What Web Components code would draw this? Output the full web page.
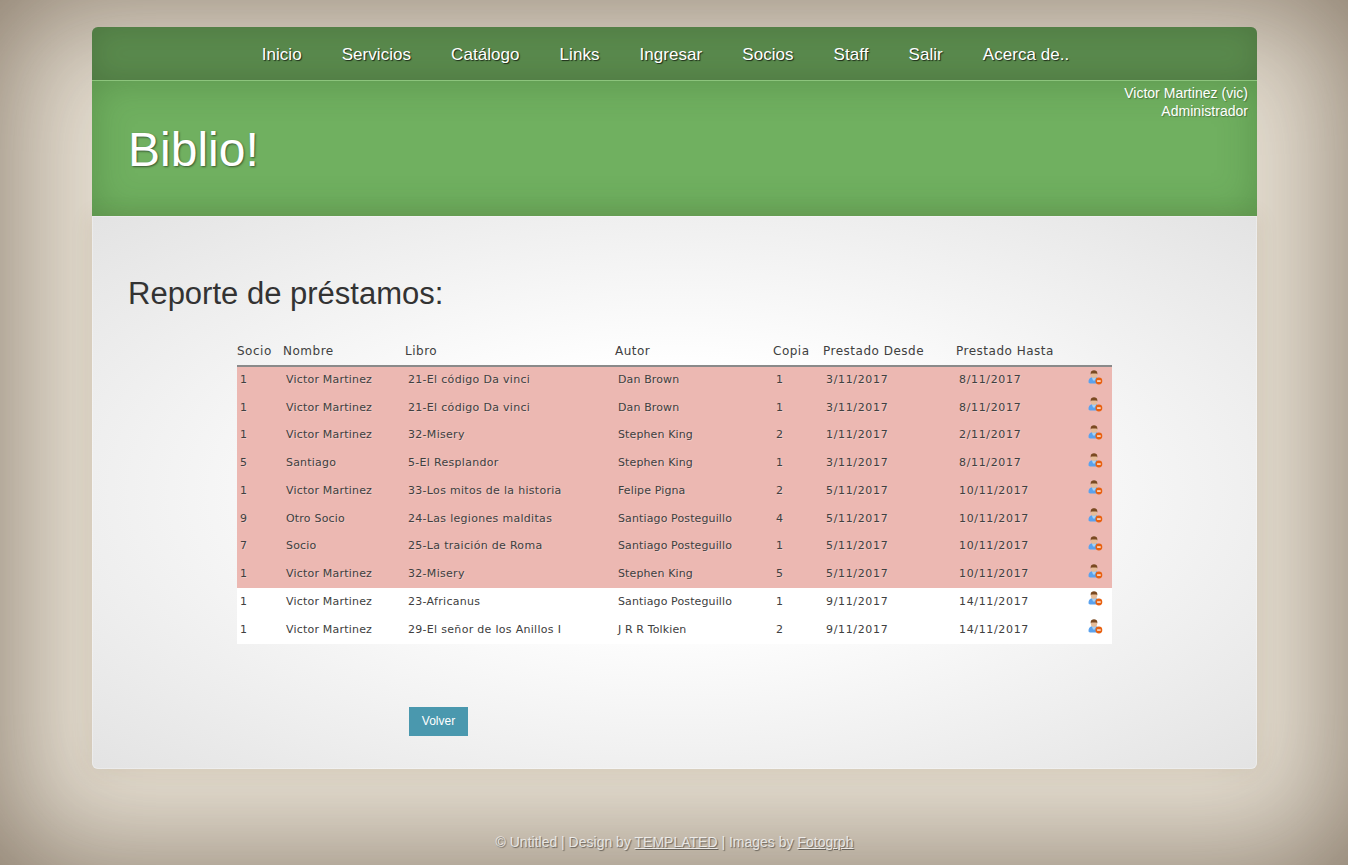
<!DOCTYPE html>
<html lang="es">
<head>
<meta charset="utf-8">
<title>Biblio!</title>
<style>
  html, body { margin: 0; height: 100%; }
  body {
    box-sizing: border-box;
    height: 865px;
    overflow: hidden;
    padding: 27px 91px 0 92px;
    background: #e6dfd2;
    box-shadow: inset 0 0 130px rgba(70, 50, 30, .62);
    font-family: "Liberation Sans", Arial, sans-serif;
  }
</style>
</head>
<body>
  <bib-nav>
    <nav-link>Inicio</nav-link>
    <nav-link>Servicios</nav-link>
    <nav-link>Catálogo</nav-link>
    <nav-link>Links</nav-link>
    <nav-link>Ingresar</nav-link>
    <nav-link>Socios</nav-link>
    <nav-link>Staff</nav-link>
    <nav-link>Salir</nav-link>
    <nav-link>Acerca de..</nav-link>
  </bib-nav>
  <bib-header title-text="Biblio!">
    <span>Victor Martinez (vic)</span>
    <span>Administrador</span>
  </bib-header>
  <bib-content>
    <span slot="title">Reporte de préstamos:</span>
    <prestamos-table></prestamos-table>
    <bib-button>Volver</bib-button>
  </bib-content>
  <bib-footer></bib-footer>

<script>
// barra de navegacion
class BibNav extends HTMLElement {
  constructor() {
    super();
    this.attachShadow({ mode: 'open' });
    this.shadowRoot.innerHTML = `<style>
      :host {
        display: flex;
        justify-content: center;
        gap: 40px;
        height: 53px;
        padding-right: 18px;
        border-radius: 6px 6px 0 0;
        background: #5a8a4d;
        box-shadow: inset 0 0 30px rgba(30, 50, 25, .22);
      }
    </style><slot></slot>`;
  }
}
customElements.define('bib-nav', BibNav);

class NavLink extends HTMLElement {
  constructor() {
    super();
    this.attachShadow({ mode: 'open' });
    this.shadowRoot.innerHTML = `<style>
      :host {
        display: block;
        font-size: 17px;
        letter-spacing: .05px;
        line-height: 55px;
        color: #fff;
        text-shadow: 1px 1px 1px rgba(0, 0, 0, .7);
      }
    </style><slot></slot>`;
  }
}
customElements.define('nav-link', NavLink);

class BibHeader extends HTMLElement {
  constructor() {
    super();
    this.attachShadow({ mode: 'open' });
    this.shadowRoot.innerHTML = `<style>
      :host {
        display: block;
        box-sizing: border-box;
        height: 136px;
        padding: 3px 9px 0 36px;
        border-top: 1px solid #8cc47c;
        background: #70b060;
        box-shadow: inset 0 0 38px rgba(40, 80, 30, .3);
        color: #fff;
      }
      .user {
        display: flex;
        flex-direction: column;
        align-items: flex-end;
        font-size: 14px;
        letter-spacing: .02px;
        line-height: 18px;
        text-shadow: 1px 1px 1px rgba(0, 0, 0, .3);
      }
      h1 {
        margin: 0;
        padding-top: 2px;
        font-size: 48px;
        line-height: 55px;
        font-weight: normal;
        text-shadow: 1px 1px 2px rgba(0, 0, 0, .5);
      }
    </style>
    <div class="user"><slot></slot></div>
    <h1></h1>`;
  }
  connectedCallback() {
    this.shadowRoot.querySelector('h1').textContent = this.getAttribute('title-text');
  }
}
customElements.define('bib-header', BibHeader);

class BibContent extends HTMLElement {
  constructor() {
    super();
    this.attachShadow({ mode: 'open' });
    this.shadowRoot.innerHTML = `<style>
      :host {
        display: block;
        box-sizing: border-box;
        height: 553px;
        padding: 58px 145px 0 36px;
        border-radius: 0 0 6px 6px;
        background: radial-gradient(ellipse farthest-corner at 50% 50%, #fff 32%, #e3e3e3 100%);
        box-shadow: inset 0 0 0 1px rgba(255, 255, 255, .3), 0 1px 22px rgba(130, 100, 60, .14);
      }
      h2 {
        margin: 0 0 22px;
        font-size: 31px;
        line-height: 40px;
        font-weight: normal;
        color: #333;
      }
      .body { padding-left: 109px; }
    </style>
    <h2><slot name="title"></slot></h2>
    <div class="body"><slot></slot></div>`;
  }
}
customElements.define('bib-content', BibContent);

const filas = [
  ['1', 'Victor Martinez', '21-El código Da vinci', 'Dan Brown', '1', '3/11/2017', '8/11/2017', 1],
  ['1', 'Victor Martinez', '21-El código Da vinci', 'Dan Brown', '1', '3/11/2017', '8/11/2017', 1],
  ['1', 'Victor Martinez', '32-Misery', 'Stephen King', '2', '1/11/2017', '2/11/2017', 1],
  ['5', 'Santiago', '5-El Resplandor', 'Stephen King', '1', '3/11/2017', '8/11/2017', 1],
  ['1', 'Victor Martinez', '33-Los mitos de la historia', 'Felipe Pigna', '2', '5/11/2017', '10/11/2017', 1],
  ['9', 'Otro Socio', '24-Las legiones malditas', 'Santiago Posteguillo', '4', '5/11/2017', '10/11/2017', 1],
  ['7', 'Socio', '25-La traición de Roma', 'Santiago Posteguillo', '1', '5/11/2017', '10/11/2017', 1],
  ['1', 'Victor Martinez', '32-Misery', 'Stephen King', '5', '5/11/2017', '10/11/2017', 1],
  ['1', 'Victor Martinez', '23-Africanus', 'Santiago Posteguillo', '1', '9/11/2017', '14/11/2017', 0],
  ['1', 'Victor Martinez', '29-El señor de los Anillos I', 'J R R Tolkien', '2', '9/11/2017', '14/11/2017', 0]
];

const iconoSocio = `<svg width="15" height="15" viewBox="0 0 15 15">
  <path d="M.5 12.500C.3 9.800 1.500 7.900 3.500 7.300h5c2 .6 3 2.300 3 4.300l-2 2H1.800z" fill="#5aa2ee"/>
  <path d="M3.800 7.300h4.400L7 10.500H5z" fill="#a8d2f4"/>
  <rect x="3" y="1" width="6" height="6.800" rx="2.600" fill="#e6bc98"/>
  <path d="M2.700 4.400V3C2.700 1.200 4.200.3 6 .3S9.300 1.200 9.300 3v1.400L8.500 3.400H3.500z" fill="#7a4a22"/>
  <circle cx="10.900" cy="11" r="3.400" fill="#e8600f"/>
  <rect x="9.100" y="10.400" width="3.600" height="1.300" fill="#fff"/>
</svg>`;

class PrestamosTable extends HTMLElement {
  constructor() {
    super();
    this.attachShadow({ mode: 'open' });
    const heads = ['Socio', 'Nombre', 'Libro', 'Autor', 'Copia', 'Prestado Desde', 'Prestado Hasta', ''];
    const cuerpo = filas.map(f => `<tr class="${f[7] ? 'vencido' : ''}">
      ${f.slice(0, 7).map(c => `<td>${c}</td>`).join('')}<td class="ico">${iconoSocio}</td></tr>`).join('');
    this.shadowRoot.innerHTML = `<style>
      :host { display: block; width: 875px; }
      table {
        width: 875px;
        table-layout: fixed;
        border-collapse: collapse;
        font-family: "DejaVu Sans", sans-serif;
        color: #404040;
      }
      th {
        box-sizing: border-box;
        height: 30px;
        padding: 0;
        text-align: left;
        font-size: 12px;
        font-weight: normal;
        letter-spacing: .5px;
        border-bottom: 2px solid #8a8a8a;
      }
      td {
        box-sizing: border-box;
        height: 27.75px;
        padding: 0 0 1px 3px;
        font-size: 11px;
        background: #fff;
        white-space: nowrap;
      }
      /* la fuente del original es mas ancha, se compensa por columna */
      td:nth-child(2) { letter-spacing: .2px; }
      td:nth-child(3) { letter-spacing: .3px; }
      td:nth-child(4) { letter-spacing: .12px; }
      td:nth-child(6), td:nth-child(7) { letter-spacing: .66px; }
      tr.vencido td { background: #ecb8b2; text-shadow: 1px 1px 0 rgba(255, 255, 255, .25); }
      td.ico { padding: 0 0 6px 4px; vertical-align: middle; }
      td.ico svg { display: block; }
    </style>
    <table>
      <colgroup>
        <col style="width:46px"><col style="width:122px"><col style="width:210px"><col style="width:158px">
        <col style="width:50px"><col style="width:133px"><col style="width:128px"><col>
      </colgroup>
      <thead><tr>${heads.map(h => `<th>${h}</th>`).join('')}</tr></thead>
      <tbody>${cuerpo}</tbody>
    </table>`;
  }
}
customElements.define('prestamos-table', PrestamosTable);

class BibButton extends HTMLElement {
  constructor() {
    super();
    this.attachShadow({ mode: 'open' });
    this.shadowRoot.innerHTML = `<style>
      :host {
        display: block;
        width: 59px;
        height: 29px;
        margin: 63px 0 0 172px;
        background: #4a98ae;
        color: #fff;
        font-size: 12px;
        line-height: 29px;
        text-align: center;
      }
    </style><slot></slot>`;
  }
}
customElements.define('bib-button', BibButton);

class BibFooter extends HTMLElement {
  constructor() {
    super();
    this.attachShadow({ mode: 'open' });
    this.shadowRoot.innerHTML = `<style>
      :host {
        display: block;
        padding-top: 64px;
        font-size: 14px;
        line-height: 18px;
        text-align: center;
        color: rgba(255, 255, 255, .75);
        text-shadow: 1px 1px 1px rgba(0, 0, 0, .45);
      }
      a { color: inherit; }
    </style>© Untitled | Design by <a href="#">TEMPLATED</a> | Images by <a href="#">Fotogrph</a>`;
  }
}
customElements.define('bib-footer', BibFooter);
</script>
</body>
</html>
